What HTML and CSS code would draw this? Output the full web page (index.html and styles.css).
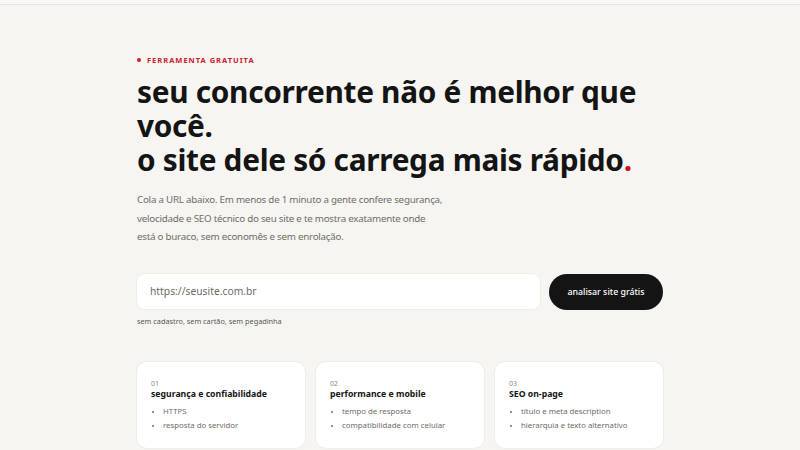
FILE: index.html
```html
<!DOCTYPE html>
<html lang="pt-BR">
<head>
<meta charset="utf-8">
<title>Análise de site</title>
<link rel="stylesheet" href="styles.css">
</head>
<body>
<header class="topbar"></header>
<main class="hero">
  <p class="eyebrow"><span class="dot"></span>FERRAMENTA GRATUITA</p>
  <h1 class="title">seu concorrente não é melhor que você.<br>o site dele só carrega mais rápido<span class="red">.</span></h1>
  <p class="lead">Cola a URL abaixo. Em menos de 1 minuto a gente confere segurança,<br>velocidade e SEO técnico do seu site e te mostra exatamente onde<br>está o buraco, sem economês e sem enrolação.</p>
  <form class="search">
    <input class="url" type="text" placeholder="https://seusite.com.br">
    <button class="btn" type="button">analisar site grátis</button>
  </form>
  <p class="note">sem cadastro, sem cartão, sem pegadinha</p>
  <section class="cards">
    <div class="card">
      <span class="num">01</span>
      <h3 class="card-title">segurança e confiabilidade</h3>
      <ul class="list"><li>HTTPS</li><li>resposta do servidor</li></ul>
    </div>
    <div class="card">
      <span class="num">02</span>
      <h3 class="card-title">performance e mobile</h3>
      <ul class="list"><li>tempo de resposta</li><li>compatibilidade com celular</li></ul>
    </div>
    <div class="card">
      <span class="num">03</span>
      <h3 class="card-title">SEO on-page</h3>
      <ul class="list"><li>título e meta description</li><li>hierarquia e texto alternativo</li></ul>
    </div>
  </section>
</main>
</body>
</html>
```
FILE: styles.css
```css
* { box-sizing: border-box; }
html, body { margin: 0; padding: 0; }
body {
  background: #f6f5f1;
  font-family: "Noto Sans", "Open Sans", sans-serif;
  color: #141414;
  overflow: hidden;
  height: 450px;
}
.topbar {
  height: 5px;
  background: #f8f7f5;
  border-bottom: 1px solid #e7e5e0;
}
.hero {
  width: 526px;
  margin: 0 auto;
  padding-top: 50px;
}
.eyebrow {
  margin: 0;
  display: flex;
  align-items: center;
  gap: 6px;
  font-size: 7.5px;
  font-weight: 700;
  letter-spacing: 1px;
  color: #c8202c;
  height: 10px;
}
.dot {
  width: 4px;
  height: 4px;
  border-radius: 50%;
  background: #c8202c;
}
.title {
  margin: 10px 0 0;
  font-size: 29.8px;
  line-height: 34px;
  font-weight: 700;
  letter-spacing: -0.3px;
  color: #141414;
}
.red { color: #d0121f; }
.lead {
  margin: 14px 0 0;
  width: 360px;
  font-size: 9.8px;
  letter-spacing: -0.25px;
  line-height: 18.5px;
  color: #6f6d69;
  white-space: nowrap;
}
.search {
  margin-top: 27px;
  display: flex;
  gap: 9px;
}
.url {
  flex: 1;
  height: 35px;
  border: none;
  border-radius: 8px;
  background: #ffffff;
  padding: 0 13px;
  font-family: inherit;
  font-size: 10.3px;
  color: #141414;
  outline: none;
  box-shadow: 0 0 0 1px #efede8;
}
.url::placeholder { color: #6e6c68; }
.btn {
  width: 114px;
  height: 36px;
  border: none;
  border-radius: 18px;
  background: #141414;
  color: #ffffff;
  font-family: inherit;
  font-size: 8.8px;
  font-weight: 500;
}
.note {
  margin: 6px 0 0;
  font-size: 7.3px;
  color: #5a5855;
}
.cards {
  margin-top: 36px;
  display: grid;
  grid-template-columns: repeat(3, 1fr);
  gap: 11px;
}
.card {
  background: #ffffff;
  border-radius: 10px;
  padding: 17px 14px 14px;
  height: 86px;
  box-shadow: 0 0 0 1px #efede8;
}
.num {
  display: block;
  font-size: 7px;
  color: #8a8884;
  line-height: 9px;
}
.card-title {
  margin: 0;
  font-size: 8.7px;
  line-height: 12px;
  font-weight: 700;
  color: #141414;
}
.list {
  margin: 4px 0 0;
  padding: 0 0 0 12px;
  font-size: 7.8px;
  line-height: 14px;
  color: #6e6c68;
}
.list li::marker { font-size: 7px; }
```
